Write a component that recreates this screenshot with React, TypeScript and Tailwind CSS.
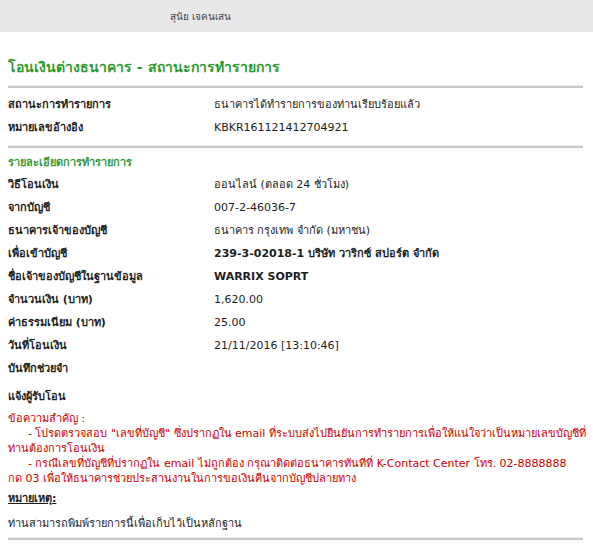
import React from "react";

const rows1: { l: string; v: React.ReactNode }[] = [
  { l: "สถานะการทำรายการ", v: "ธนาคารได้ทำรายการของท่านเรียบร้อยแล้ว" },
  { l: "หมายเลขอ้างอิง", v: "KBKR161121412704921" },
];

const rows2: { l: React.ReactNode; v: React.ReactNode; b?: boolean }[] = [
  { l: "วิธีโอนเงิน", v: "ออนไลน์ (ตลอด 24 ชั่วโมง)" },
  { l: "จากบัญชี", v: "007-2-46036-7" },
  { l: "ธนาคารเจ้าของบัญชี", v: "ธนาคาร กรุงเทพ จำกัด (มหาชน)" },
  { l: "เพื่อเข้าบัญชี", v: "239-3-02018-1 บริษัท วาริกซ์ สปอร์ต จำกัด", b: true },
  { l: "ชื่อเจ้าของบัญชีในฐานข้อมูล", v: "WARRIX SOPRT", b: true },
  { l: "จำนวนเงิน (บาท)", v: "1,620.00" },
  { l: "ค่าธรรมเนียม (บาท)", v: "25.00" },
  { l: "วันที่โอนเงิน", v: "21/11/2016 [13:10:46]" },
  { l: "บันทึกช่วยจำ", v: "" },
];

function Rule() {
  return <div className="h-[3px] border-t border-[#eeeeee] bg-[#c8c8c8] bg-clip-content" />;
}

export default function App() {
  return (
    <div
      className="w-[593px] h-[548px] bg-white text-[11px] text-[#1e1e1e] overflow-hidden"
      style={{ fontFamily: "Tahoma, 'DejaVu Sans', 'Noto Sans', sans-serif" }}
    >
      <div className="h-[32px] bg-[#e8e8e8] flex items-center pl-[170px] text-[#444] text-[10px]">
        สุนัย เจคนเสน
      </div>
      <div className="pl-[8px] pr-[10px]">
        <div className="pt-[25px] h-[53px] text-[14px] text-[#2f9a2f] font-bold leading-[20px]">
          โอนเงินต่างธนาคาร - สถานะการทำรายการ
        </div>
        <Rule />
        <div className="pt-[6px] pb-[5px]">
          {rows1.map((r, i) => (
            <div key={i} className="flex h-[23px] items-center">
              <div className="w-[206px] font-bold">{r.l}</div>
              <div>{r.v}</div>
            </div>
          ))}
        </div>
        <Rule />
        <div className="pt-[5px] h-[26px] text-[#3a9a3a] font-bold leading-[20px]">
          รายละเอียดการทำรายการ
        </div>
        {rows2.map((r, i) => (
          <div key={i} className="flex h-[23px] items-center">
            <div className="w-[206px] font-bold">{r.l}</div>
            <div className={r.b ? "font-bold" : ""}>{r.v}</div>
          </div>
        ))}
        <div className="flex h-[24px] items-end font-bold">แจ้งผู้รับโอน</div>
        <div className="pt-[6px] text-[#cc0000] leading-[15px] whitespace-nowrap">
          <div>ข้อความสำคัญ :</div>
          <div>
            <span className="pl-[20px]">- โปรดตรวจสอบ "เลขที่บัญชี" ซึ่งปรากฏใน email ที่ระบบส่งไปยืนยันการทำรายการเพื่อให้แน่ใจว่าเป็นหมายเลขบัญชีที่</span>
          </div>
          <div>ท่านต้องการโอนเงิน</div>
          <div>
            <span className="pl-[20px]">- กรณีเลขที่บัญชีที่ปรากฏใน email ไม่ถูกต้อง กรุณาติดต่อธนาคารทันทีที่ K-Contact Center โทร. 02-8888888</span>
          </div>
          <div>กด 03 เพื่อให้ธนาคารช่วยประสานงานในการขอเงินคืนจากบัญชีปลายทาง</div>
        </div>
        <div className="pt-[5px] font-bold underline leading-[16px]">หมายเหตุ:</div>
        <div className="pt-[9px] leading-[16px]">ท่านสามารถพิมพ์รายการนี้เพื่อเก็บไว้เป็นหลักฐาน</div>
        <div className="pt-[5px]">
          <Rule />
        </div>
      </div>
    </div>
  );
}
